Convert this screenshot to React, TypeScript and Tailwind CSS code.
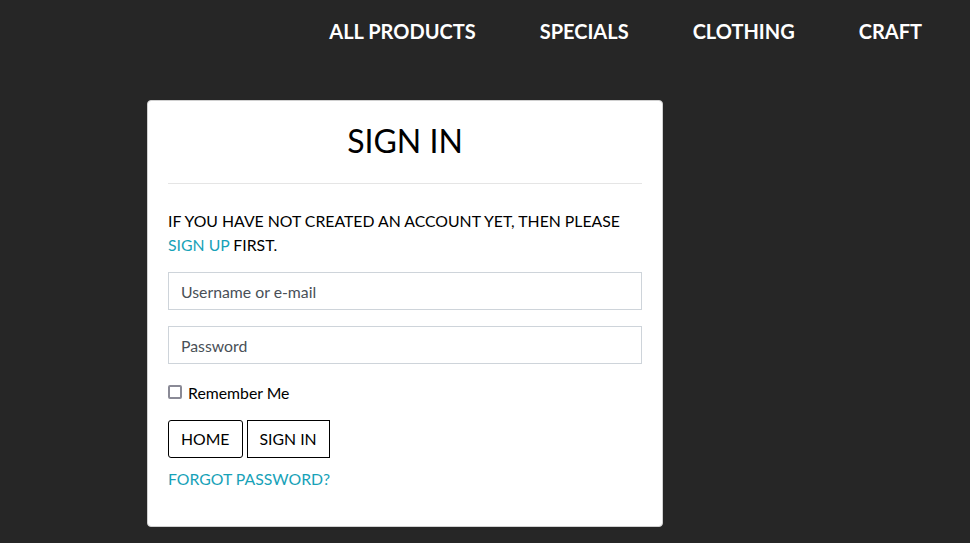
export default function App() {
  const font = { fontFamily: 'Lato, "Noto Sans", sans-serif' };

  return (
    <div className="min-h-[543px] bg-[#262626]" style={font}>
      {/* ナビゲーション */}
      <nav className="flex h-[62px] items-center justify-end gap-[64px] pr-[48px]">
        {['ALL PRODUCTS', 'SPECIALS', 'CLOTHING', 'CRAFT'].map((item) => (
          <a key={item} className="text-[20px] font-bold leading-[24px] text-white">
            {item}
          </a>
        ))}
      </nav>

      {/* サインインカード */}
      <div className="ml-[147px] mt-[38px] w-[516px] rounded-[4px] border border-[#d0d0d0] bg-white px-[20px] pb-[35px] pt-[20px]">
        <h1 className="text-center text-[32px] font-normal leading-[40px] text-black">SIGN IN</h1>
        <hr className="mt-[22px] border-t border-[#e5e5e5]" />

        <p className="mt-[25px] text-[15.8px] leading-[24px] text-black">
          IF YOU HAVE NOT CREATED AN ACCOUNT YET, THEN PLEASE
          <br />
          <a className="text-[#17a2b8]">SIGN UP</a> FIRST.
        </p>

        <input
          type="text"
          placeholder="Username or e-mail"
          className="mt-[15px] block h-[38px] w-full border border-[#ced4da] px-3 text-[15.8px] text-[#495057] placeholder:text-[#495057] focus:outline-none"
        />
        <input
          type="password"
          placeholder="Password"
          className="mt-[16px] block h-[38px] w-full border border-[#ced4da] px-3 text-[15.8px] text-[#495057] placeholder:text-[#495057] focus:outline-none"
        />

        <label className="mt-[17px] flex h-[24px] items-center text-[15.8px] text-black">
          <span className="mr-[6px] -mt-[2px] inline-block h-[14px] w-[14px] rounded-[2px] border-2 border-[#8a8a96] bg-white" />
          Remember Me
        </label>

        <div className="mt-[15px] flex gap-[4px]">
          <button className="h-[38px] rounded-[3px] border border-black bg-white px-[12px] text-[15.8px] text-black">
            HOME
          </button>
          <button className="h-[38px] border border-black bg-white px-[12px] text-[15.8px] text-black">
            SIGN IN
          </button>
        </div>

        <a className="mt-[9px] block text-[15.8px] leading-[24px] text-[#17a2b8]">FORGOT PASSWORD?</a>
      </div>
    </div>
  );
}
